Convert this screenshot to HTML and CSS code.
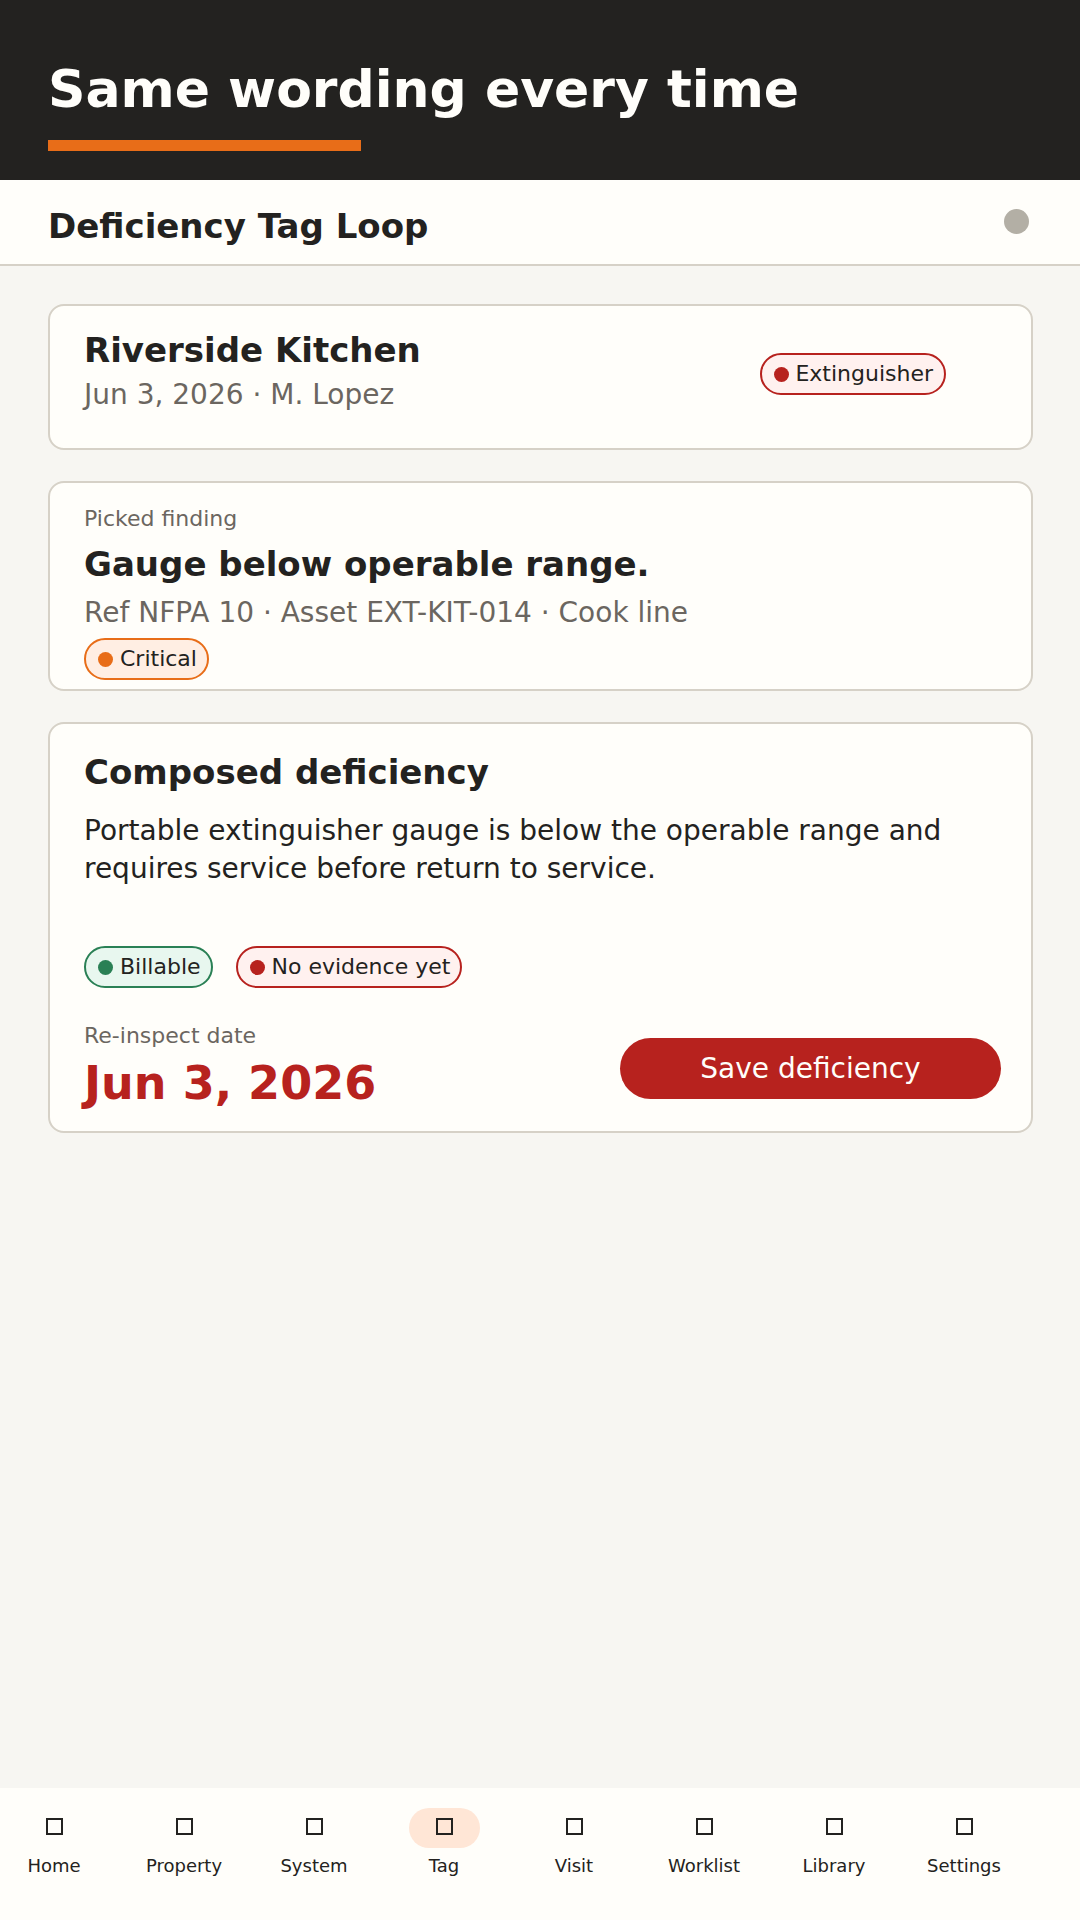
FILE: index.html
```html
<!DOCTYPE html>
<html lang="en">
<head>
<meta charset="utf-8">
<title>Deficiency Tag Loop</title>
<link rel="stylesheet" href="styles.css">
</head>
<body>
<div class="app">
  <header class="hero">
    <h1 class="hero-title">Same wording every time</h1>
    <div class="hero-bar"></div>
  </header>
  <div class="subhead">
    <h2 class="subhead-title">Deficiency Tag Loop</h2>
    <span class="status-dot"></span>
  </div>
  <main class="content">
    <section class="card card-visit">
      <div class="visit-text">
        <div class="title">Riverside Kitchen</div>
        <div class="meta visit-meta">Jun 3, 2026 · M. Lopez</div>
      </div>
      <span class="chip chip-red"><i class="dot"></i>Extinguisher</span>
    </section>
    <section class="card card-finding">
      <div class="label">Picked finding</div>
      <div class="title finding-title">Gauge below operable range.</div>
      <div class="meta finding-meta">Ref NFPA 10 · Asset EXT-KIT-014 · Cook line</div>
      <span class="chip chip-orange"><i class="dot"></i>Critical</span>
    </section>
    <section class="card card-composed">
      <div class="title">Composed deficiency</div>
      <p class="body-text">Portable extinguisher gauge is below the operable range and requires service before return to service.</p>
      <div class="chips">
        <span class="chip chip-green"><i class="dot"></i>Billable</span>
        <span class="chip chip-red"><i class="dot"></i>No evidence yet</span>
      </div>
      <div class="footer-row">
        <div>
          <div class="label">Re-inspect date</div>
          <div class="date">Jun 3, 2026</div>
        </div>
        <button class="save" type="button">Save deficiency</button>
      </div>
    </section>
  </main>
  <nav class="nav">
    <div class="nav-item"><span class="nav-icon"><i class="square"></i></span><span class="nav-label">Home</span></div>
    <div class="nav-item"><span class="nav-icon"><i class="square"></i></span><span class="nav-label">Property</span></div>
    <div class="nav-item"><span class="nav-icon"><i class="square"></i></span><span class="nav-label">System</span></div>
    <div class="nav-item"><span class="nav-icon active"><i class="square"></i></span><span class="nav-label">Tag</span></div>
    <div class="nav-item"><span class="nav-icon"><i class="square"></i></span><span class="nav-label">Visit</span></div>
    <div class="nav-item"><span class="nav-icon"><i class="square"></i></span><span class="nav-label">Worklist</span></div>
    <div class="nav-item"><span class="nav-icon"><i class="square"></i></span><span class="nav-label">Library</span></div>
    <div class="nav-item"><span class="nav-icon"><i class="square"></i></span><span class="nav-label">Settings</span></div>
  </nav>
</div>
</body>
</html>
```

FILE: styles.css
```css
* { box-sizing: border-box; }
html, body { margin: 0; padding: 0; }
body { font-family: "DejaVu Sans", sans-serif; color: #232220; background: #f7f6f2; }
.app { width: 1080px; height: 1920px; display: flex; flex-direction: column; overflow: hidden; }

.hero { height: 180px; background: #232220; padding: 60px 48px 0; flex: none; }
.hero-title { margin: 0; font-size: 52px; line-height: 58px; font-weight: 700; color: #fffefa; }
.hero-bar { width: 313px; height: 11px; margin-top: 22px; background: #e86d18; }

.subhead { height: 86px; flex: none; background: #fffefa; border-bottom: 2px solid #d6d1c7; display: flex; align-items: center; justify-content: space-between; padding: 8px 51px 0 48px; }
.subhead-title { margin: 0; font-size: 34px; line-height: 44px; font-weight: 700; }
.status-dot { width: 25px; height: 25px; border-radius: 50%; background: #b3afa5; margin-bottom: 10px; }

.content { flex: 1; padding: 38px 47px 0 48px; display: flex; flex-direction: column; gap: 31px; }
.card { background: #fffefa; border: 2px solid #d6d1c7; border-radius: 16px; padding: 0 34px; flex: none; }
.card-visit { height: 146px; display: flex; justify-content: space-between; align-items: flex-start; padding-top: 24px; padding-right: 85px; }
.card-finding { height: 210px; padding-top: 22px; }
.card-composed { height: 411px; padding-top: 28px; padding-right: 30px; }

.title { font-size: 34px; line-height: 40px; font-weight: 700; }
.meta { font-size: 28px; line-height: 36px; color: #6b6660; }
.visit-meta { margin-top: 7px; }
.label { font-size: 22px; line-height: 28px; color: #6b6660; }
.finding-title { margin-top: 11px; }
.finding-meta { margin-top: 11px; }

.chip { display: inline-flex; align-items: center; gap: 7px; height: 42px; padding: 0 10px 0 12px; border: 2px solid; border-radius: 21px; font-size: 22px; line-height: 28px; color: #232220; }
.dot { width: 15px; height: 15px; border-radius: 50%; display: block; flex: none; }
.chip-red { background: #fff1ef; border-color: #b7221e; }
.chip-red .dot { background: #b7221e; }
.chip-orange { background: #ffeee3; border-color: #e86d18; }
.chip-orange .dot { background: #e86d18; }
.chip-green { background: #e8f7ef; border-color: #2a8055; }
.chip-green .dot { background: #2a8055; }
.card-visit .chip { margin-top: 23px; gap: 6px; padding-right: 11px; }
.card-finding .chip { margin-top: 7px; }

.body-text { margin: 20px 0 0; font-size: 28px; line-height: 38px; }
.chips { display: flex; gap: 23px; margin-top: 58px; }
.footer-row { display: flex; justify-content: space-between; align-items: center; margin-top: 34px; }
.date { font-size: 46px; line-height: 56px; font-weight: 700; color: #b7221e; margin-top: 5px; }
.save { width: 381px; height: 61px; margin-top: 4px; border: 0; border-radius: 30.5px; background: #b7221e; color: #fffefa; font: 400 28px/32px "DejaVu Sans", sans-serif; padding: 1px 0 0; }

.nav { height: 132px; flex: none; background: #fffefa; display: flex; gap: 22px; padding-top: 20px; }
.nav-item { width: 108px; display: flex; flex-direction: column; align-items: center; gap: 6px; }
.nav-icon { width: 71px; height: 40px; border-radius: 20px; display: flex; align-items: center; justify-content: center; padding-bottom: 3px; }
.nav-icon.active { background: #ffe6d6; }
.square { width: 17px; height: 17px; border: 2px solid #232220; display: block; }
.nav-label { font-size: 18px; line-height: 24px; }
```
